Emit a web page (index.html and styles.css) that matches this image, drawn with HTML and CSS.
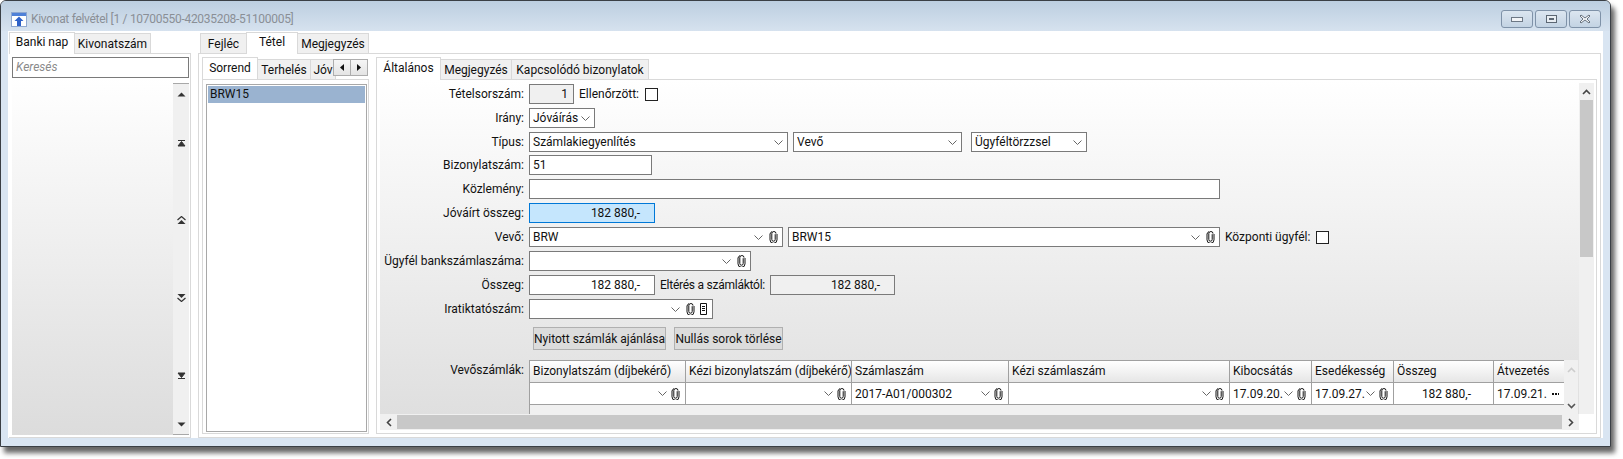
FILE: index.html
```html
<!DOCTYPE html>
<html lang="hu">
<head>
<meta charset="utf-8">
<title>Kivonat felvétel</title>
<link rel="stylesheet" href="styles.css">
</head>
<body>
<svg class="defs" width="0" height="0" aria-hidden="true">
  <symbol id="clip" viewBox="0 0 9 12"><path d="M6.2 3.2v5.3a1.7 1.7 0 0 1-3.4 0V2.6a2.1 2.1 0 0 1 4.2 0M1 3v5.8a3.5 3.5 0 0 0 7 0V3M1 3a3.5 3.5 0 0 1 2-2.4" fill="none" stroke="#111" stroke-width="1"/></symbol>
  <symbol id="chev" viewBox="0 0 9 5"><path d="M.5.5l4 4 4-4" fill="none" stroke="#666" stroke-width="1"/></symbol>
  <symbol id="doc" viewBox="0 0 9 12"><path d="M1.5.5h6v11h-6zM3 3.5h3M3 5.5h3M3 7.5h3" fill="none" stroke="#111" stroke-width="1"/></symbol>
  <symbol id="up" viewBox="0 0 9 5"><path d="M4.5.5L8.5 4.5H.5z" fill="#333"/></symbol>
  <symbol id="top" viewBox="0 0 9 7"><path d="M1 .5h7M4.5 1.5L8 6H1z" fill="#333" stroke="#333" stroke-width="1"/></symbol>
  <symbol id="pgup" viewBox="0 0 9 8"><path d="M.5 4l4-3.5 4 3.5" fill="none" stroke="#333" stroke-width="1.2"/><path d="M4.5 4L8.5 8H.5z" fill="#333"/></symbol>
</svg>
<div class="window">
  <header class="titlebar">
    <svg class="app-icon" width="16" height="15" viewBox="0 0 16 15"><rect x=".5" y=".5" width="15" height="14" fill="#fff" stroke="#8fa8d0"/><rect x="1" y="1" width="14" height="3" fill="#4f81d8"/><path d="M8 4.5l4.5 4.5H10v5H6V9H3.5z" fill="#2f62c8"/></svg>
    <span class="title">Kivonat felvétel [1 / 10700550-42035208-51100005]</span>
    <div class="win-btns">
      <button class="win-btn"><svg width="12" height="5" viewBox="0 0 12 5"><rect x=".5" y=".5" width="11" height="4" fill="#f2f4f7" stroke="#6d7885"/></svg></button>
      <button class="win-btn"><svg width="11" height="8" viewBox="0 0 11 8"><rect x=".5" y=".5" width="10" height="7" fill="#e8edf2" stroke="#5c6773"/><rect x="3" y="3" width="5" height="2" fill="#5c6773"/></svg></button>
      <button class="win-btn"><svg width="12" height="10" viewBox="0 0 12 10"><path d="M2 1l4 3 4-3 1 1-3 3 3 3-1 1-4-3-4 3-1-1 3-3-3-3z" fill="#f4f6f8" stroke="#5c6773" stroke-width=".9"/></svg></button>
    </div>
  </header>
  <div class="client">
    <section class="left-pane">
      <nav class="tabbar">
        <span class="tab active t66">Banki nap</span>
        <span class="tab t76">Kivonatszám</span>
      </nav>
      <div class="left-body">
        <div class="search">Keresés</div>
        <div class="left-list">
          <div class="list-fill"></div>
          <div class="nav-strip">
            <svg class="ns1" width="9" height="5"><use href="#up"/></svg>
            <svg class="ns2" width="9" height="7"><use href="#top"/></svg>
            <svg class="ns3" width="9" height="8"><use href="#pgup"/></svg>
            <svg class="ns4 flip" width="9" height="8"><use href="#pgup"/></svg>
            <svg class="ns5 flip" width="9" height="7"><use href="#top"/></svg>
            <svg class="ns6 flip" width="9" height="5"><use href="#up"/></svg>
          </div>
        </div>
      </div>
    </section>
    <section class="main-pane">
      <nav class="tabbar">
        <span class="tab t46">Fejléc</span>
        <span class="tab active t51">Tétel</span>
        <span class="tab t71">Megjegyzés</span>
      </nav>
      <div class="main-body">
        <div class="order-col">
          <nav class="tabbar sub clipbar">
            <span class="tab active t56">Sorrend</span>
            <span class="tab t53">Terhelés</span>
            <span class="tab t26">Jóv</span>
            <div class="tab-nav">
              <button><svg width="4" height="7" viewBox="0 0 4 7"><path d="M4 0v7L0 3.5z" fill="#111"/></svg></button>
              <button><svg width="4" height="7" viewBox="0 0 4 7"><path d="M0 0v7l4-3.5z" fill="#111"/></svg></button>
            </div>
          </nav>
          <div class="order-body">
            <div class="listbox"><div class="list-item">BRW15</div></div>
          </div>
        </div>
        <div class="detail-col">
          <nav class="tabbar sub">
            <span class="tab active t65">Általános</span>
            <span class="tab t71">Megjegyzés</span>
            <span class="tab t137">Kapcsolódó bizonylatok</span>
          </nav>
          <div class="detail-body">
            <div class="form">
              <div class="row r-first">
                <label class="lbl">Tételsorszám:</label>
                <div class="field ro num w45">1</div>
                <span class="txt">Ellenőrzött:</span>
                <span class="check"></span>
              </div>
              <div class="row">
                <label class="lbl">Irány:</label>
                <div class="field combo w66"><span class="val">Jóváírás</span><svg class="chev" width="9" height="5"><use href="#chev"/></svg></div>
              </div>
              <div class="row tight">
                <label class="lbl">Típus:</label>
                <div class="field combo w259"><span class="val">Számlakiegyenlítés</span><svg class="chev" width="9" height="5"><use href="#chev"/></svg></div>
                <div class="field combo w169"><span class="val">Vevő</span><svg class="chev" width="9" height="5"><use href="#chev"/></svg></div>
                <div class="field combo w116 ml4"><span class="val">Ügyféltörzzsel</span><svg class="chev" width="9" height="5"><use href="#chev"/></svg></div>
              </div>
              <div class="row">
                <label class="lbl">Bizonylatszám:</label>
                <div class="field w123">51</div>
              </div>
              <div class="row">
                <label class="lbl">Közlemény:</label>
                <div class="field w691"></div>
              </div>
              <div class="row">
                <label class="lbl">Jóváírt összeg:</label>
                <div class="field num focus w126">182 880,-</div>
              </div>
              <div class="row">
                <label class="lbl">Vevő:</label>
                <div class="field combo w254"><span class="val">BRW</span><svg class="chev" width="9" height="5"><use href="#chev"/></svg><svg class="clip" width="9" height="12"><use href="#clip"/></svg></div>
                <div class="field combo w432"><span class="val">BRW15</span><svg class="chev" width="9" height="5"><use href="#chev"/></svg><svg class="clip" width="9" height="12"><use href="#clip"/></svg></div>
                <span class="txt">Központi ügyfél:</span>
                <span class="check"></span>
              </div>
              <div class="row">
                <label class="lbl">Ügyfél bankszámlaszáma:</label>
                <div class="field combo w222"><span class="val"></span><svg class="chev" width="9" height="5"><use href="#chev"/></svg><svg class="clip" width="9" height="12"><use href="#clip"/></svg></div>
              </div>
              <div class="row">
                <label class="lbl">Összeg:</label>
                <div class="field num w126">182 880,-</div>
                <span class="txt diff">Eltérés a számláktól:</span>
                <div class="field ro num w125">182 880,-</div>
              </div>
              <div class="row">
                <label class="lbl">Iratiktatószám:</label>
                <div class="field combo w184"><span class="val"></span><svg class="chev" width="9" height="5"><use href="#chev"/></svg><svg class="clip" width="9" height="12"><use href="#clip"/></svg><svg class="doc" width="9" height="12"><use href="#doc"/></svg></div>
              </div>
              <div class="btn-row">
                <button class="btn w133">Nyitott számlák ajánlása</button>
                <button class="btn w109">Nullás sorok törlése</button>
              </div>
              <div class="grid-row">
                <label class="lbl grid-lbl">Vevőszámlák:</label>
                <div class="grid">
                  <div class="grid-table">
                    <div class="cols head">
                      <div>Bizonylatszám (díjbekérő)</div>
                      <div>Kézi bizonylatszám (díjbekérő)</div>
                      <div>Számlaszám</div>
                      <div>Kézi számlaszám</div>
                      <div>Kibocsátás</div>
                      <div>Esedékesség</div>
                      <div>Összeg</div>
                      <div>Átvezetés</div>
                    </div>
                    <div class="cols data">
                      <div class="cell"><span class="val"></span><svg class="chev" width="9" height="5"><use href="#chev"/></svg><svg class="clip" width="9" height="12"><use href="#clip"/></svg></div>
                      <div class="cell"><span class="val"></span><svg class="chev" width="9" height="5"><use href="#chev"/></svg><svg class="clip" width="9" height="12"><use href="#clip"/></svg></div>
                      <div class="cell"><span class="val">2017-A01/000302</span><svg class="chev" width="9" height="5"><use href="#chev"/></svg><svg class="clip" width="9" height="12"><use href="#clip"/></svg></div>
                      <div class="cell"><span class="val"></span><svg class="chev" width="9" height="5"><use href="#chev"/></svg><svg class="clip" width="9" height="12"><use href="#clip"/></svg></div>
                      <div class="cell"><span class="val">17.09.20.</span><svg class="chev" width="9" height="5"><use href="#chev"/></svg><svg class="clip" width="9" height="12"><use href="#clip"/></svg></div>
                      <div class="cell"><span class="val">17.09.27.</span><svg class="chev" width="9" height="5"><use href="#chev"/></svg><svg class="clip" width="9" height="12"><use href="#clip"/></svg></div>
                      <div class="cell right">182 880,-</div>
                      <div class="cell"><span class="val">17.09.21.</span><span class="dots"></span></div>
                    </div>
                  </div>
                  <div class="grid-scroll">
                    <svg width="9" height="6" viewBox="0 0 9 6"><path d="M1 5l3.5-3.5L8 5" fill="none" stroke="#ccc" stroke-width="1.6"/></svg>
                    <svg width="9" height="6" viewBox="0 0 9 6"><path d="M1 1l3.5 3.5L8 1" fill="none" stroke="#555" stroke-width="1.6"/></svg>
                  </div>
                </div>
              </div>
            </div>
            <div class="vscroll">
              <div class="sb-btn"><svg width="9" height="6" viewBox="0 0 9 6"><path d="M1 5l3.5-3.5L8 5" fill="none" stroke="#444" stroke-width="1.6"/></svg></div>
              <div class="v-thumb"></div>
            </div>
            <div class="hscroll">
              <div class="sb-btn h"><svg width="6" height="9" viewBox="0 0 6 9"><path d="M5 1L1.5 4.5 5 8" fill="none" stroke="#444" stroke-width="1.6"/></svg></div>
              <div class="h-thumb"></div>
              <div class="sb-btn h"><svg width="6" height="9" viewBox="0 0 6 9"><path d="M1 1l3.5 3.5L1 8" fill="none" stroke="#444" stroke-width="1.6"/></svg></div>
            </div>
          </div>
        </div>
      </div>
    </section>
  </div>
</div>
</body>
</html>
```

FILE: styles.css
```css
* { box-sizing: border-box; }
html, body { margin: 0; height: 459px; overflow: hidden; background: #fff; }
body { font: 12px/16px Roboto, "Noto Sans", sans-serif; color: #111; }
.defs { position: absolute; }
svg { display: block; flex: none; }

.window {
  width: 1611px; height: 447px;
  background: #d9e5f2;
  border: 1px solid #3a3f45; border-radius: 6px 6px 0 0;
  box-shadow: 4px 6px 5px rgba(0,0,0,.6);
  display: flex; flex-direction: column;
}
.titlebar {
  height: 30px; flex: none; display: flex; align-items: center;
  padding: 0 9px 0 10px;
  background: linear-gradient(#bccee0, #d6e2ef);
  border-radius: 5px 5px 0 0;
}
.app-icon { margin-top: 6px; }
.title { margin: 6px 0 0 4px; color: #8a8f96; letter-spacing: -.3px; }
.win-btns { margin-left: auto; display: flex; gap: 2px; align-self: flex-start; margin-top: 9px; }
.win-btn {
  width: 32px; height: 18px; padding: 0; display: flex; align-items: center; justify-content: center;
  border: 1px solid #7f92a8; border-radius: 3px;
  background: linear-gradient(#dce6f0, #c3d3e3);
}

.client {
  height: 407px; margin: 0 7px; padding: 1px 0 0 1px;
  background: #fff; display: flex; gap: 7px;
}
.left-pane { width: 182px; display: flex; flex-direction: column; }
.main-pane { width: 1403px; display: flex; flex-direction: column; }

.tabbar { height: 21px; flex: none; display: flex; align-items: flex-end; position: relative; z-index: 1; }
.tab {
  height: 20px; padding: 2px 0 0; text-align: center; white-space: nowrap; flex: none;
  background: #f0f0f0; border: 1px solid #d9d9d9; border-bottom: 0; margin-left: -1px;
}
.tab:first-child { margin-left: 0; }
.tab.active { height: 22px; margin-bottom: -1px; background: #fff; padding-top: 1px; position: relative; z-index: 2; }
.tabbar.sub { height: 22px; }
.tabbar.sub .tab.active { height: 23px; padding-top: 2px; }
.order-col .tabbar.sub .tab.active { height: 22px; margin-bottom: 0; }
.main-pane > .tabbar .tab:first-child { margin-left: 2px; }
.t26 { width: 26px; } .t46 { width: 47px; } .t51 { width: 52px; } .t53 { width: 54px; }
.t56 { width: 56px; } .t65 { width: 65px; } .t66 { width: 66px; } .t71 { width: 72px; }
.t76 { width: 77px; } .t137 { width: 138px; }

.left-body {
  flex: 1; border: 1px solid #d9d9d9; border-left: 0;
  padding: 3px 1px 2px 3px; display: flex; flex-direction: column;
}
.search {
  height: 21px; flex: none; padding: 1px 3px; width: 177px;
  border: 1px solid #7a7a7a;
  font-style: italic; color: #8a8a8a;
}
.left-list { flex: 1; display: flex; }
.list-fill { width: 161px; background: linear-gradient(#fff, #dcdcdc); }
.nav-strip {
  width: 16px; margin-top: 5px; background: #f0f0f0;
  border-top: 1px solid #a8a8a8; border-bottom: 1px solid #a8a8a8;
  display: flex; flex-direction: column; align-items: center;
}
.flip { transform: scaleY(-1); }
.ns1 { margin-top: 8px; }
.ns2 { margin-top: 43px; }
.ns3 { margin-top: 69px; }
.ns4 { margin-top: 70px; }
.ns5 { margin-top: 70px; }
.ns6 { margin-top: 43px; }

.main-body {
  flex: 1; border: 1px solid #d9d9d9; padding: 3px;
  display: flex; gap: 7px; align-items: flex-start;
}
.order-col { width: 167px; }
.clipbar { width: 167px; }
.tab-nav { position: absolute; left: 132px; top: 2px; display: flex; z-index: 3; }
.tab-nav button {
  width: 18px; height: 17px; padding: 0; display: flex; align-items: center; justify-content: center;
  border: 1px solid #adadad; background: linear-gradient(#f6f6f6, #e4e4e4); margin-left: -1px;
}
.order-body { height: 355px; border: 1px solid #d9d9d9; padding: 4px 1px 2px 3px; }
.listbox { height: 348px; border: 1px solid #a8a8a8; padding: 1px; background: #fff; }
.list-item { height: 17px; background: #9ab3d0; padding: 0 2px; line-height: 17px; }

.detail-col { width: 1221px; }
.detail-body {
  height: 355px; border: 1px solid #d9d9d9; padding: 0 2px 3px 3px;
  display: grid; grid-template-columns: 1199px 15px; grid-template-rows: 334px 16px;
}
.form { background: linear-gradient(#fff, #dfdfdf); overflow: hidden; padding-top: 4px; }
.row { display: flex; align-items: center; gap: 5px; height: 20px; margin-bottom: 4px; white-space: nowrap; }
.row.tight { margin-bottom: 3px; }
.lbl { width: 144px; flex: none; text-align: right; }
.txt { flex: none; }
.diff { width: 105px; letter-spacing: -.25px; }
.field {
  height: 20px; flex: none; padding: 0 3px; line-height: 18px;
  border: 1px solid #7a7a7a; background: #fff;
}
.ro { background: #f0f0f0; }
.num { text-align: right; padding-right: 14px; }
.ro.w45 { padding-right: 5px; }
.focus { background: #c5e6fd; border-color: #0078d7; }
.combo { display: flex; align-items: center; padding-right: 4px; }
.val { flex: 1; min-width: 0; overflow: hidden; }
.clip { margin-left: 6px; }
.doc { margin-left: 4px; }
.check { width: 13px; height: 13px; flex: none; border: 1px solid #222; background: #fff; }
.txt + .check { margin-left: 1px; }
.ml4 { margin-left: 4px; }
.w45 { width: 45px; } .w66 { width: 66px; } .w116 { width: 116px; } .w123 { width: 123px; }
.w125 { width: 125px; } .w126 { width: 126px; } .w169 { width: 169px; } .w184 { width: 184px; }
.w222 { width: 222px; } .w254 { width: 254px; } .w259 { width: 259px; } .w432 { width: 432px; }
.w691 { width: 691px; } .w133 { width: 133px; } .w109 { width: 109px; }

.btn-row { display: flex; gap: 8px; margin: 8px 0 0 153px; }
.btn {
  height: 23px; padding: 0; font: inherit; color: #111; white-space: nowrap;
  background: #dcdcdc; border: 1px solid #b0b0b0;
}
.grid-row { display: flex; gap: 5px; margin-top: 10px; }
.grid-lbl { padding-top: 2px; }
.grid { width: 1049px; height: 54px; display: flex; }
.grid-table { width: 1035px; background: #f0f0f0; border-left: 1px solid #a0a0a0; border-top: 1px solid #a0a0a0; }
.cols { display: grid; grid-template-columns: 156px 166px 157px 221px 82px 82px 100px 71px; }
.head { height: 22px; border-bottom: 1px solid #a0a0a0; background: linear-gradient(#fff, #e6e6e6); }
.head > div { padding: 2px 3px 0; border-right: 1px solid #a0a0a0; white-space: nowrap; overflow: hidden; }
.data { height: 22px; border-bottom: 1px solid #a0a0a0; background: #fff; }
.cell { border-right: 1px solid #a0a0a0; padding: 0 5px 0 3px; display: flex; align-items: center; white-space: nowrap; }
.cell .clip { margin: 0 0 0 4px; }
.right { justify-content: flex-end; padding-right: 22px; }
.dots { width: 7px; height: 2px; background: repeating-linear-gradient(90deg, #111 0 2px, transparent 2px 3px); }
.grid-scroll {
  width: 14px; background: #f0f0f0; display: flex; flex-direction: column; align-items: center;
  padding-top: 7px; gap: 30px;
}

.vscroll { margin-top: 3px; background: #f0f0f0; }
.sb-btn { height: 17px; display: flex; align-items: center; justify-content: center; background: #f0f0f0; }
.v-thumb { height: 157px; background: #c8c8c8; margin: 0 1px; }
.hscroll { display: flex; background: #f0f0f0; }
.sb-btn.h { width: 17px; height: 16px; flex: none; }
.h-thumb { flex: 1; background: #c8c8c8; margin: 1px 0; }
```
